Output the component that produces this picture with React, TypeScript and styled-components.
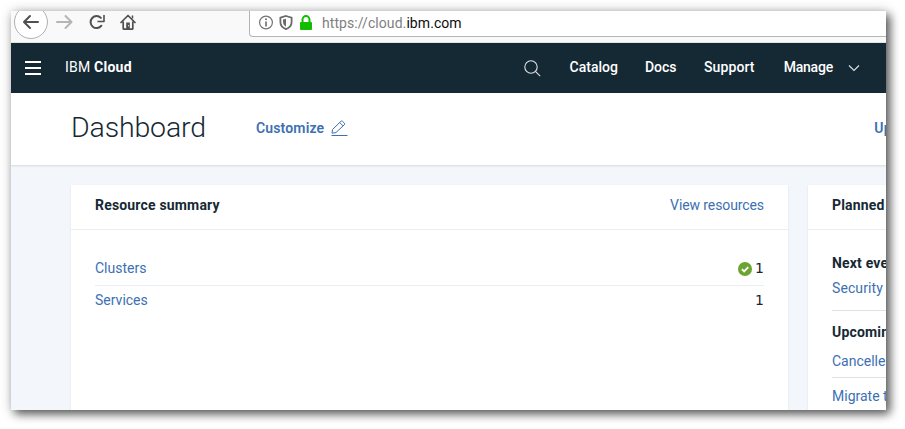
import React from "react";
import styled, { createGlobalStyle } from "styled-components";

const GlobalStyle = createGlobalStyle`
  * { box-sizing: border-box; }
  body { margin: 0; background: #fff; font-family: Roboto, "Liberation Sans", sans-serif; }
  svg { display: block; flex: none; }
`;

const Stage = styled.div`
  width: 905px;
  height: 429px;
  padding: 11px 19px 19px 11px;
  overflow: hidden;
`;

const BrowserWindow = styled.div`
  width: 875px;
  height: 399px;
  box-shadow: 4px 4px 9px rgba(0, 0, 0, 0.6), 1px 1px 12px rgba(0, 0, 0, 0.22);
`;

const Viewport = styled.div`
  width: 100%;
  height: 100%;
  overflow: hidden;
  display: flex;
  flex-direction: column;
  background: #f3f6fb;
`;

const Toolbar = styled.div`
  flex: none;
  display: flex;
  align-items: flex-start;
  height: 32px;
  background: #f9f9f9;
  border-bottom: 1px solid #e2e2e2;
`;

const BrowserIcons = styled.div`
  width: 238px;
  flex: none;
`;

const AddressBar = styled.div`
  flex: 1;
  height: 26px;
  display: flex;
  align-items: center;
  padding: 0 0 2px 9px;
  background: #fff;
  border-left: 1px solid #b5b5b5;
  border-bottom: 1px solid #b5b5b5;
  border-bottom-left-radius: 4px;
`;

const Url = styled.span`
  margin-left: 9px;
  font-size: 14px;
  line-height: 20px;
  letter-spacing: 0.07px;
  color: #808080;
  white-space: nowrap;
`;

const Domain = styled.span`
  color: #0c0c0d;
`;

const NavBar = styled.nav`
  flex: none;
  display: flex;
  align-items: center;
  height: 50px;
  padding: 0 26px 0 14px;
  background: #152934;
  color: #fff;
`;

const Brand = styled.div`
  margin: 0 auto 2px 24px;
  font-size: 14px;
  line-height: 20px;
  letter-spacing: 0.2px;
`;

const BrandName = styled.b`
  letter-spacing: 0.25px;
`;

const NavItem = styled.a<{ $gap: number; $tracking?: number }>`
  margin: 0 0 2px ${(p) => p.$gap}px;
  font-size: 14px;
  font-weight: 500;
  line-height: 20px;
  letter-spacing: ${(p) => p.$tracking ?? 0}px;
`;

const ManageChevron = styled.svg`
  margin-left: 15px;
`;

const PageHeader = styled.header`
  flex: none;
  position: relative;
  display: flex;
  align-items: center;
  height: 72px;
  padding-left: 60px;
  background: #fff;
  box-shadow: 0 1px 2px rgba(0, 0, 0, 0.12);
`;

const Title = styled.h1`
  flex: none;
  margin: 0 0 3px;
  width: 185px;
  font-size: 28.5px;
  font-weight: 300;
  line-height: 36px;
  letter-spacing: -0.15px;
  color: #152934;
`;

const HeaderLink = styled.a`
  flex: none;
  margin-bottom: 2px;
  font-size: 14px;
  font-weight: 600;
  line-height: 20px;
  letter-spacing: 0.15px;
  color: #3d70b2;
`;

const EditIcon = styled.svg`
  margin-left: 7px;
  margin-bottom: 1px;
`;

const UpgradeLink = styled(HeaderLink)`
  margin-left: 526px;
  white-space: nowrap;
`;

const Board = styled.main`
  flex: 1;
  min-height: 0;
  display: grid;
  grid-template-columns: 717px 350px;
  column-gap: 20px;
  padding: 20px 0 0 60px;
`;

const Card = styled.section`
  background: #fff;
  box-shadow: 0 1px 2px rgba(60, 90, 120, 0.13);
`;

const CardHeader = styled.div`
  display: flex;
  justify-content: space-between;
  height: 45px;
  padding: 10px 24px 0;
  border-bottom: 1px solid #ebeef0;
`;

const Heading = styled.h2`
  margin: 0;
  font-size: 14px;
  font-weight: 700;
  line-height: 20px;
  letter-spacing: 0.18px;
  color: #152934;
  white-space: nowrap;
`;

const Link = styled.a<{ $tracking?: number }>`
  font-size: 14px;
  line-height: 20px;
  letter-spacing: ${(p) => p.$tracking ?? 0}px;
  color: #3d70b2;
  white-space: nowrap;
`;

const ResourceList = styled.div`
  padding: 24px 24px 0;
`;

const ResourceRow = styled.div<{ $divided?: boolean }>`
  display: flex;
  justify-content: space-between;
  height: ${(p) => (p.$divided ? 32 : 31)}px;
  padding-top: 4px;
  border-bottom: ${(p) => (p.$divided ? "1px solid #ebeef0" : "none")};
`;

const Count = styled.span`
  display: flex;
  align-items: center;
  gap: 3px;
  height: 20px;
  font: 14px/20px "DejaVu Sans", sans-serif;
  color: #152934;
`;

const CheckMark = styled.svg`
  margin-top: 2px;
`;

const Events = styled.div`
  padding: 23px 0 0 24px;
`;

const EventGroup = styled.div<{ $height: number; $gap: number }>`
  display: flex;
  flex-direction: column;
  gap: ${(p) => p.$gap}px;
  height: ${(p) => p.$height}px;
  border-bottom: 1px solid #dfe3e6;
`;

const GroupSpacer = styled.div<{ $height: number }>`
  height: ${(p) => p.$height}px;
`;

export default function App() {
  return (
    <>
      <GlobalStyle />
      <Stage>
        <BrowserWindow>
          <Viewport>
            <Toolbar>
              <BrowserIcons>
                <svg width="238" height="31" viewBox="0 0 238 31" fill="none" strokeWidth="2" strokeLinecap="round" strokeLinejoin="round">
                  <circle cx="20" cy="11" r="16.5" fill="#fff" stroke="#b1b1b1" strokeWidth="1" />
                  <path d="M27 11H13.5M19 5l-6 6 6 6" stroke="#505050" />
                  <path d="M46 11h14M54.500 5l6 6-6 6" stroke="#b5b5b5" />
                  <path d="M90.400 14.700a6 6 0 1 1-.5-7.800" stroke="#505050" />
                  <path d="M93 4v6.500h-6.500" stroke="#505050" strokeWidth="1.600" strokeLinecap="butt" />
                  <path d="M110 11.500l7-7 7 7M112.200 11v6.500q0 .7.700.7h8.200q.7 0 .7-.7V11" stroke="#505050" strokeWidth="1.700" />
                  <path d="M121.500 4.500v3" stroke="#505050" strokeWidth="1.500" strokeLinecap="butt" />
                  <rect x="115.200" y="11.500" width="3.600" height="6.500" fill="#505050" />
                  <path d="M117.500 14.500v.5" stroke="#ddd" strokeWidth="1" />
                </svg>
              </BrowserIcons>
              <AddressBar>
                <svg width="54" height="16" viewBox="0 0 54 16" fill="none">
                  <circle cx="7" cy="7.500" r="6.400" stroke="#737373" strokeWidth="1.200" />
                  <circle cx="7" cy="4.300" r="1" fill="#737373" />
                  <path d="M7 6.500v5" stroke="#737373" strokeWidth="1.700" />
                  <path d="M27 1l5.600 1.600v4.300c0 3.600-2.400 5.900-5.600 7.200-3.200-1.300-5.600-3.600-5.600-7.200V2.600z" stroke="#6b6b6b" strokeWidth="1.800" />
                  <path d="M27 3.700v8c-1.800-1.100-3-2.700-3-5V4.500z" fill="#6b6b6b" />
                  <path d="M43.500 8V4.600a3.500 3.500 0 0 1 7 0V8" stroke="#12bc00" strokeWidth="2" />
                  <rect x="41" y="7" width="12" height="8" rx="1" fill="#12bc00" />
                </svg>
                <Url>
                  https://cloud.<Domain>ibm.com</Domain>
                </Url>
              </AddressBar>
            </Toolbar>

            <NavBar>
              <svg width="16" height="14" viewBox="0 0 16 14" fill="#fff">
                <path d="M0 0h16v2H0zM0 6h16v2H0zM0 12h16v2H0z" />
              </svg>
              <Brand>
                IBM <BrandName>Cloud</BrandName>
              </Brand>
              <svg width="17" height="17" viewBox="0 0 17 17" fill="none" stroke="#dfe3e6" strokeWidth="1.100">
                <circle cx="7" cy="7" r="6.200" />
                <path d="M11.400 11.400l4.800 4.800" />
              </svg>
              <NavItem $gap={29}>Catalog</NavItem>
              <NavItem $gap={27}>Docs</NavItem>
              <NavItem $gap={27.5} $tracking={0.1}>Support</NavItem>
              <NavItem $gap={29} $tracking={-0.2}>Manage</NavItem>
              <ManageChevron width="12" height="8" viewBox="0 0 12 8" fill="none" stroke="#dfe3e6" strokeWidth="1.100">
                <path d="M1 1.500l5 5 5-5" />
              </ManageChevron>
            </NavBar>

            <PageHeader>
              <Title>Dashboard</Title>
              <HeaderLink>Customize</HeaderLink>
              <EditIcon width="17" height="17" viewBox="0 0 17 17" fill="none" stroke="#3d70b2" strokeWidth="1">
                <path d="M1 13.200l.5-3.700 8.400-8.200q.8-.7 1.600 0l1.900 1.800q.7.800 0 1.600L4.900 12.600zM8.700 2.500l3.500 3.500" />
                <path d="M.5 15.500h16" />
              </EditIcon>
              <UpgradeLink>Up</UpgradeLink>
            </PageHeader>

            <Board>
              <Card>
                <CardHeader>
                  <Heading>Resource summary</Heading>
                  <Link $tracking={-0.1}>View resources</Link>
                </CardHeader>
                <ResourceList>
                  <ResourceRow $divided>
                    <Link>Clusters</Link>
                    <Count>
                      <CheckMark width="14" height="14" viewBox="0 0 14 14" fill="none">
                        <circle cx="7" cy="7" r="7" fill="#6ba430" />
                        <path d="M3.900 7.200l2.200 2.200 4.200-4.300" stroke="#fff" strokeWidth="1.800" />
                      </CheckMark>
                      1
                    </Count>
                  </ResourceRow>
                  <ResourceRow>
                    <Link>Services</Link>
                    <Count>1</Count>
                  </ResourceRow>
                </ResourceList>
              </Card>
              <Card>
                <CardHeader>
                  <Heading>Planned</Heading>
                </CardHeader>
                <Events>
                  <EventGroup $height={58} $gap={5}>
                    <Heading>Next eve</Heading>
                    <Link $tracking={0.1}>Security</Link>
                  </EventGroup>
                  <GroupSpacer $height={11} />
                  <EventGroup $height={56} $gap={9}>
                    <Heading>Upcomin</Heading>
                    <Link>Cancelle</Link>
                  </EventGroup>
                  <GroupSpacer $height={8} />
                  <Link>Migrate t</Link>
                </Events>
              </Card>
            </Board>
          </Viewport>
        </BrowserWindow>
      </Stage>
    </>
  );
}
